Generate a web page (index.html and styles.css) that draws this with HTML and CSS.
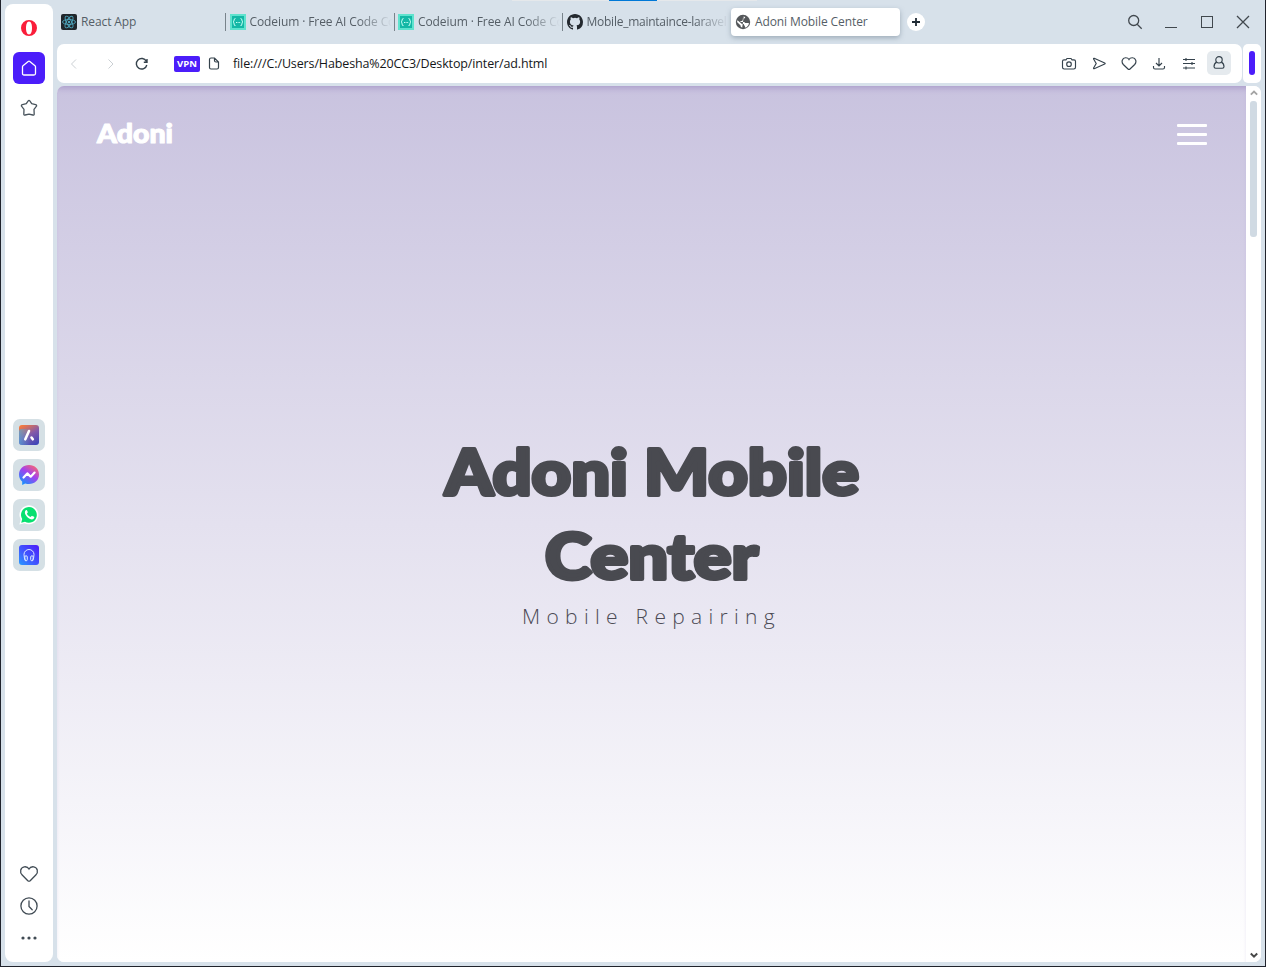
FILE: index.html
```html
<!DOCTYPE html>
<html lang="en">
<head>
<meta charset="utf-8">
<title>Adoni Mobile Center</title>
<link rel="stylesheet" href="styles.css">
</head>
<body>
<div class="window">
  <aside class="sidebar">
    <svg class="opera" width="18" height="18" viewBox="0 0 18 18"><path fill="#fa1e3a" fill-rule="evenodd" d="M9 1a8 8 0 1 0 0 16A8 8 0 1 0 9 1zM9 2.500c2 0 3 2.900 3 6.500s-1 6.500-3 6.500S6 12.600 6 9s1-6.500 3-6.500z"/></svg>
    <div class="side-btn home"><svg width="18" height="18" viewBox="0 0 18 18" fill="none" stroke="#fff" stroke-width="1.300" stroke-linejoin="round"><path d="M2.500 7.700Q2.500 7.100 3 6.700L8.200 2.500q.8-.6 1.600 0L15 6.700q.5.4.5 1V14.500q0 1.500-1.500 1.500H4Q2.500 16 2.500 14.500z"/></svg></div>
    <div class="side-btn"><svg width="18" height="18" viewBox="0 0 18 18" fill="none" stroke="#49545d" stroke-width="1.300" stroke-linejoin="round"><path d="M8.200 1.900q.8-1.100 1.600 0l1.900 2.800 3.900 1q1.400.4.9 1.500l-2.500 3.100.2 4.800q-.1 1.400-1.300.9L9 15.100 5.100 16q-1.200.5-1.300-.9l.2-4.800-2.500-3.100q-.5-1.100.9-1.500l3.900-1z"/></svg></div>
    <div class="apps">
      <div class="app"><svg width="20" height="20" viewBox="0 0 20 20"><defs><linearGradient id="aria" x1="0.200" y1="0" x2="0.800" y2="1"><stop offset="0" stop-color="#f47a3e"/><stop offset=".5" stop-color="#855aa8"/><stop offset="1" stop-color="#3f45b8"/></linearGradient><linearGradient id="ariaEdge"><stop stop-color="#4ba9df"/><stop offset="1" stop-color="#4ba9df" stop-opacity="0"/></linearGradient></defs><rect width="20" height="20" rx="3" fill="url(#aria)"/><rect y="4" width="12" height="16" rx="3" fill="url(#ariaEdge)" opacity=".7"/><path d="M6.300 14.300L10 6M12.500 12.500l1.300 1.800" stroke="#fff" stroke-width="2.600" stroke-linecap="round"/></svg></div>
      <div class="app"><svg width="20" height="20" viewBox="0 0 20 20"><defs><linearGradient id="msg" x1="0.150" y1="1" x2="0.850" y2="0"><stop stop-color="#0898ff"/><stop offset=".55" stop-color="#a142ef"/><stop offset="1" stop-color="#ff6968"/></linearGradient></defs><path fill="url(#msg)" d="M10 0C4.200 0 0 4.200 0 9.600c0 3 1.200 5.400 3.200 7V20l3-1.600c1.200.4 2.500.6 3.800.6 5.800 0 10-4.100 10-9.500S15.800 0 10 0z"/><path d="M4.500 12.500l3.800-4.100 3.400 3.300 3.900-4.100" fill="none" stroke="#fff" stroke-width="2.200" stroke-linejoin="round" stroke-linecap="round"/></svg></div>
      <div class="app"><svg width="20" height="20" viewBox="0 0 20 20"><path d="M.4 19.500l1.300-4.900A9.500 9.500 0 1 1 5.400 18.200z" fill="#fff"/><path d="M2.200 17.700l1-3.600a7.900 7.900 0 1 1 2.800 2.700z" fill="#08e070"/><path d="M6.500 5.600c1-1 1.500-.5 2.200 1.400.3.700-.5 1.200-.8 1.700.9 1.700 2 2.600 3.800 3.300.5-.4.900-1.300 1.500-1.100l1.900.9c.7.500-.1 2.100-1.300 2.500-2.900.9-8.300-3.900-7.900-7.100.1-.6.200-1.100.6-1.600z" fill="#fff"/></svg></div>
      <div class="app"><svg width="20" height="20" viewBox="0 0 20 20"><defs><linearGradient id="play" x1="0" y1="1" x2="1" y2="0"><stop stop-color="#279cff"/><stop offset=".4" stop-color="#3f5cff"/><stop offset="1" stop-color="#4b19fa"/></linearGradient></defs><rect width="20" height="20" rx="3" fill="url(#play)"/><g fill="none" stroke="#dce8ff" stroke-width="1"><path d="M6.500 15.500Q5 13 5 9.500a5 5 0 0 1 10 0Q15 13 13.500 15.500"/><rect x="5.800" y="10.800" width="2.500" height="5" rx="1.200"/><rect x="11.700" y="10.800" width="2.500" height="5" rx="1.200"/></g></svg></div>
    </div>
    <div class="side-bottom">
      <svg width="20" height="20" viewBox="0 0 20 20" fill="none" stroke="#404b54" stroke-width="1.300"><path d="M10 17.200q-.6 0-1.200-.5L3.200 11C.3 8.100 1.500 3.300 5.300 2.800Q8.600 2.400 10 5q1.400-2.600 4.700-2.200c3.800.5 5 5.300 2.100 8.200l-5.600 5.700q-.6.500-1.200.5z"/></svg>
      <svg width="20" height="20" viewBox="0 0 20 20" fill="none" stroke="#404b54" stroke-width="1.300"><circle cx="10" cy="10" r="8.100"/><path d="M10 5v5.500l3.200 3.200" stroke-linecap="round"/></svg>
      <svg width="20" height="20" viewBox="0 0 20 20" fill="#404b54"><circle cx="4" cy="10" r="1.600"/><circle cx="10" cy="10" r="1.600"/><circle cx="16" cy="10" r="1.600"/></svg>
    </div>
  </aside>
  <main class="main">
    <header class="tabs">
      <div class="tab"><svg width="16" height="16" viewBox="0 0 16 16"><rect width="16" height="16" rx="2" fill="#20262b"/><g fill="none" stroke="#4ea6bd" stroke-width=".9"><ellipse cx="8" cy="8" rx="6.500" ry="2.500"/><ellipse cx="8" cy="8" rx="6.500" ry="2.500" transform="rotate(60 8 8)"/><ellipse cx="8" cy="8" rx="6.500" ry="2.500" transform="rotate(120 8 8)"/></g><circle cx="8" cy="8" r="1.200" fill="#4ea6bd"/></svg><span class="label">React App</span></div>
      <div class="tab line"><svg width="16" height="16" viewBox="0 0 16 16"><rect width="16" height="16" fill="#5fe3ce"/><rect x="2" y="2" width="12" height="12" fill="#14b8a6"/><path d="M5.500 4.500q-1.400 0-1.400 1.500T3 8q1.100 0 1.100 2t1.400 1.500M10.500 4.500q1.400 0 1.400 1.500T13 8q-1.100 0-1.100 2t-1.400 1.500M6 8.500h1M7.600 8.500h1M9.200 8.500h1" fill="none" stroke="#c8fff4"/></svg><span class="label fade">Codeium · Free AI Code Co</span></div>
      <div class="tab line"><svg width="16" height="16" viewBox="0 0 16 16"><rect width="16" height="16" fill="#5fe3ce"/><rect x="2" y="2" width="12" height="12" fill="#14b8a6"/><path d="M5.500 4.500q-1.400 0-1.400 1.500T3 8q1.100 0 1.100 2t1.400 1.500M10.500 4.500q1.400 0 1.400 1.500T13 8q-1.100 0-1.100 2t-1.400 1.500M6 8.500h1M7.600 8.500h1M9.200 8.500h1" fill="none" stroke="#c8fff4"/></svg><span class="label fade">Codeium · Free AI Code Co</span></div>
      <div class="tab line"><svg width="16" height="16" viewBox="0 0 16 16"><path fill="#24292f" d="M8 0C3.580 0 0 3.580 0 8c0 3.540 2.290 6.530 5.470 7.590.4.070.55-.17.55-.38 0-.19-.01-.82-.01-1.490-2.010.37-2.530-.49-2.690-.94-.09-.23-.48-.94-.82-1.130-.28-.15-.68-.52-.01-.53.63-.01 1.080.58 1.230.82.72 1.210 1.870.87 2.330.66.07-.52.28-.87.51-1.070-1.780-.2-3.640-.89-3.640-3.950 0-.87.31-1.590.82-2.150-.08-.2-.36-1.020.08-2.120 0 0 .67-.21 2.200.82a7.420 7.420 0 0 1 4 0c1.530-1.040 2.200-.82 2.200-.82.44 1.100.16 1.920.08 2.120.51.56.82 1.270.82 2.150 0 3.070-1.870 3.750-3.650 3.950.29.25.54.73.54 1.480 0 1.070-.01 1.930-.01 2.200 0 .21.150.46.55.38A8.010 8.010 0 0 0 16 8c0-4.420-3.580-8-8-8z"/></svg><span class="label fade repo">Mobile_maintaince-laravel</span></div>
      <div class="tab active"><svg width="16" height="16" viewBox="0 0 16 16"><circle cx="8" cy="8" r="7.200" fill="#55585b"/><path d="M8.800 2.300l1.500 1.200-1 1.100H7.800v1.600l-1 .8H5.500v.9h3.800l.9 1.100h3.700l-.4 2-2 2.300-1.600.3v-1.500L8.900 11v-1H7L2.500 6.300 2 8l3.600 3.500v1l1.600 1.300" fill="#fff"/></svg><span class="label">Adoni Mobile Center</span></div>
      <div class="plus"><svg width="18" height="18" viewBox="0 0 18 18"><path d="M9 5v8M5 9h8" stroke="#202b35" stroke-width="1.800"/></svg></div>
      <div class="controls">
        <svg width="16" height="16" viewBox="0 0 16 16"><circle cx="6.700" cy="6.500" r="5"/><path d="M10.200 10.200l4.500 4.500"/></svg>
        <svg width="16" height="16" viewBox="0 0 16 16"><path d="M2 13.500h12" shape-rendering="crispEdges"/></svg>
        <svg width="16" height="16" viewBox="0 0 16 16"><path d="M2.500 2.500h11v11h-11z" shape-rendering="crispEdges"/></svg>
        <svg width="16" height="16" viewBox="0 0 16 16"><path d="M2 2l12 12M14 2L2 14"/></svg>
      </div>
      <div class="accent"></div>
    </header>
    <div class="bars">
      <div class="toolbar">
        <div class="nav">
          <svg width="16" height="16" viewBox="0 0 16 16" stroke="#cbd0d4"><path d="M10 3.500L5.500 8l4.500 4.500"/></svg>
          <svg width="16" height="16" viewBox="0 0 16 16" stroke="#cbd0d4"><path d="M5.500 3.500L10 8l-4.500 4.500"/></svg>
          <svg width="16" height="16" viewBox="0 0 16 16" stroke="#35424c" stroke-width="1.400"><path d="M13.300 5.200A5.300 5.300 0 1 0 13.800 9M14 3v3.200h-3.200"/></svg>
        </div>
        <span class="vpn">VPN</span>
        <svg class="doc" width="12" height="14" viewBox="0 0 12 14" fill="none" stroke="#35424c" stroke-width="1.200"><path d="M3 1h3.500l4 4v5.500q0 1.500-1.500 1.500H3q-1.500 0-1.500-1.500v-8Q1.500 1 3 1zM6.500 1v2.500Q6.500 5 8 5h2.500"/></svg>
        <span class="url">file:///C:/Users/Habesha%20CC3/Desktop/inter/ad.html</span>
        <div class="tools">
          <svg width="16" height="16" viewBox="0 0 16 16"><path d="M5 3.800L6 2.500h4l1 1.300h2q1.500 0 1.500 1.500v6q0 1.700-1.700 1.700H3.200q-1.700 0-1.700-1.700v-6Q1.500 3.800 3 3.800z"/><circle cx="8" cy="8.200" r="2.300"/></svg>
          <svg width="16" height="16" viewBox="0 0 16 16"><path d="M3.200 2.300l10.500 4.600q1 .6 0 1.200L3.200 12.700q-.9.200-.6-.8l2.600-4.400-2.600-4.400q-.3-1 .6-.8z"/></svg>
          <svg width="16" height="16" viewBox="0 0 16 16"><path d="M8 13.500q-.5 0-1-.5L2.300 8.500C0 6 1.200 2 4.500 1.800Q7 1.700 8 3.500q1-1.800 3.500-1.700C14.800 2 16 6 13.700 8.500L9 13q-.5.500-1 .5z"/></svg>
          <svg width="16" height="16" viewBox="0 0 16 16"><path d="M8 2v8M5 7l3 3 3-3M2.500 10v1.500q0 1.500 1.500 1.500h8q1.500 0 1.500-1.500V10"/></svg>
          <svg width="16" height="16" viewBox="0 0 16 16"><path d="M2 3.500h12M2 7.500h12M2 12h12M5 2v3M11 6v3M5 10.500v3"/></svg>
          <div class="profile"><svg width="16" height="16" viewBox="0 0 16 16"><circle cx="8" cy="4.800" r="3.200"/><path d="M5.700 7.100Q3.200 8.200 3 11.500q.1 1.700 1.600 1.700h6.800q1.600 0 1.600-1.700-.2-3.300-2.700-4.400"/></svg></div>
        </div>
      </div>
      <div class="panel"><i></i></div>
    </div>
    <div class="view">
      <section class="page">
        <div class="page-head">
          <svg class="logo" width="86" height="34" viewBox="0 0 86 34"><text x="2" y="26" textLength="76" lengthAdjust="spacingAndGlyphs">Adoni</text></svg>
          <div class="menu"><i></i><i></i><i></i></div>
        </div>
        <div class="hero">
          <svg class="title" width="440" height="170" viewBox="0 0 440 170"><text x="13" y="64" textLength="414" lengthAdjust="spacingAndGlyphs">Adoni Mobile</text><text x="113" y="148" textLength="213" lengthAdjust="spacingAndGlyphs">Center</text></svg>
          <p class="subtitle">Mobile Repairing</p>
        </div>
      </section>
      <div class="scroll">
        <svg width="10" height="8" viewBox="0 0 10 8"><path d="M1.800 5.600L5 2.500l3.200 3.100" fill="none" stroke="#a5a5a5" stroke-width="1.800"/></svg>
        <div class="thumb"></div>
        <svg class="down" width="10" height="8" viewBox="0 0 10 8"><path d="M1.800 2.500L5 5.600l3.200-3.100" fill="none" stroke="#484848" stroke-width="2"/></svg>
      </div>
    </div>
  </main>
</div>
</body>
</html>
```
FILE: styles.css
```css
* { box-sizing: border-box; }
body { margin: 0; overflow: hidden; font-family: "Open Sans", "Noto Sans", sans-serif; }
svg { display: block; flex: none; }
.window { width: 1266px; height: 967px; display: flex; gap: 4px; background: #d7e1ea; border: 1px solid #20232c; border-top: 0; padding: 0 4px 4px 4px; }
.sidebar { width: 48px; margin-top: 4px; background: #fff; border-radius: 8px; display: flex; flex-direction: column; align-items: center; padding-top: 15px; }
.side-btn { width: 32px; height: 32px; margin-top: 8px; border-radius: 6px; display: flex; align-items: center; justify-content: center; }
.side-btn.home { background: #4b1dfa; margin-top: 15px; }
.apps { display: grid; gap: 8px; margin-top: 295px; }
.app { width: 32px; height: 32px; border-radius: 7px; background: #d5e0e5; display: flex; align-items: center; justify-content: center; }
.side-bottom { margin-top: auto; margin-bottom: 14px; display: grid; gap: 12px; }
.main { flex: 1; min-width: 0; display: flex; flex-direction: column; }
.tabs { height: 44px; display: flex; align-items: center; position: relative; }
.accent { position: absolute; left: 455px; top: 0; width: 245px; height: 1px; background: linear-gradient(90deg, #e5e8eb 97px, #0078d7 97px, #0078d7 145px, #e5e8eb 145px); }
.tab { position: relative; width: 168.500px; height: 28px; flex: none; display: flex; align-items: center; gap: 4px; padding: 0 4px 0 4px; color: #555e66; font-size: 12px; }
.tab.line::before { content: ""; position: absolute; left: 0; top: 5px; width: 1px; height: 18px; background: #78838b; margin-left: -0.500px; }
.tab.active { background: #fff; border-radius: 4px; box-shadow: 0 2px 5px #78889899; }
.label { white-space: nowrap; letter-spacing: -0.100px; line-height: 18px; }
.label.fade { -webkit-mask-image: linear-gradient(90deg, #000 108px, transparent 142px); mask-image: linear-gradient(90deg, #000 108px, transparent 142px); }
.label.repo { letter-spacing: -0.250px; }
.plus { margin-left: 7px; width: 18px; height: 18px; background: #fff; border-radius: 50%; }
.controls { margin-left: auto; margin-right: 10px; display: flex; gap: 20px; }
.controls svg { fill: none; stroke: #41484e; stroke-width: 1.300; }
.bars { display: flex; gap: 1px; height: 39px; flex: none; }
.toolbar { flex: 1; background: #fff; border-radius: 7px; display: flex; align-items: center; padding: 0 11px 0 9px; }
.nav { display: flex; width: 83px; justify-content: space-between; fill: none; }
.nav svg { fill: none; }
.nav svg:nth-child(2) { margin-left: 6px; }
.vpn { margin-left: 25px; width: 26px; height: 16px; border-radius: 2px; background: #4b1dfa; color: #fff; font: 700 9.500px/16px "Open Sans", sans-serif; text-align: center; }
.doc { margin-left: 8px; }
.url { margin-left: 13px; font-size: 12.500px; letter-spacing: -0.130px; color: #151719; white-space: nowrap; }
.tools { margin-left: auto; display: flex; gap: 14px; align-items: center; }
.tools svg { fill: none; stroke: #35424c; stroke-width: 1.150; }
.profile { width: 24px; height: 24px; margin: -2px 0 0 -4px; border-radius: 5px; background: #e5eaee; display: flex; align-items: center; justify-content: center; }
.panel { width: 18px; background: #fff; border-radius: 5px; display: flex; align-items: center; justify-content: center; }
.panel i { width: 6px; height: 24px; margin-top: -1px; border-radius: 3px; background: #4b1dfa; }
.view { margin-top: 3px; flex: 1; display: flex; border-radius: 7px; overflow: hidden; background: #fff; }
.page { flex: 1; display: flex; flex-direction: column; background: linear-gradient(#c9c3df, #fff); box-shadow: inset 0 6px 6px -4px #a99bc9; }
.page-head { display: flex; justify-content: space-between; padding: 31px 39px 0 38px; }
.logo text { font: 900 27px Lato, sans-serif; fill: #fff; stroke: #fff; stroke-width: 1.100; stroke-linejoin: round; }
.menu { width: 30px; margin-top: 7px; display: flex; flex-direction: column; gap: 6px; }
.menu i { height: 3px; border-radius: 1px; background: #fff; }
.hero { margin-top: 280px; display: flex; flex-direction: column; align-items: center; }
.title text { font: 900 63px Lato, sans-serif; fill: #494a50; stroke: #494a50; stroke-width: 4; stroke-linejoin: round; }
.subtitle { margin: 0; font: 300 21px/30px "Open Sans", sans-serif; letter-spacing: 6.300px; color: #4c4b55; }
.scroll { width: 15px; display: flex; flex-direction: column; align-items: center; padding: 3px 0; background: #fff; }
.thumb { width: 7px; height: 136px; margin-top: 4px; border-radius: 3px; background: #d0dae3; }
.down { margin-top: auto; }
```
